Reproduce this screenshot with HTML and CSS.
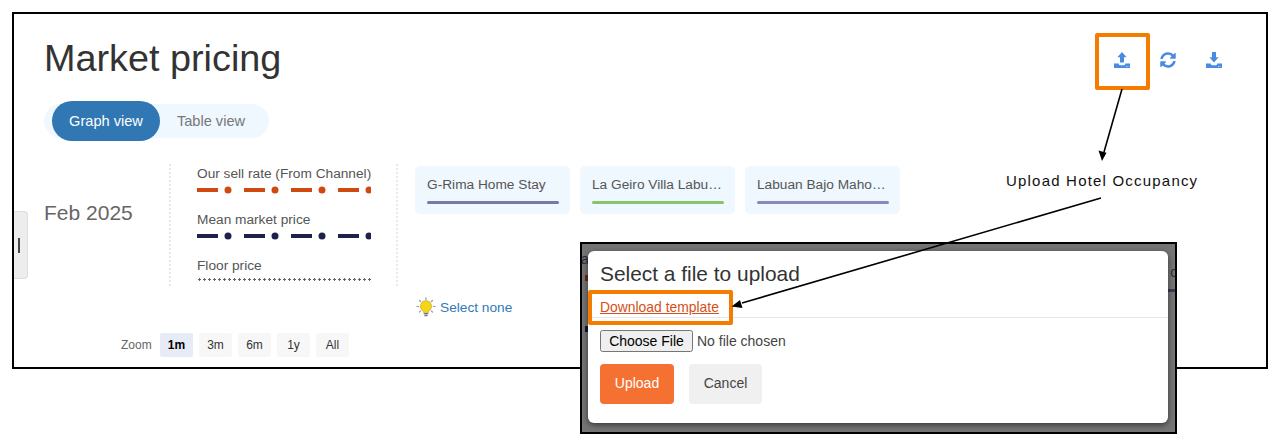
FILE: index.html
```html
<!DOCTYPE html>
<html lang="en">
<head>
<meta charset="utf-8">
<title>Market pricing</title>
<link rel="stylesheet" href="styles.css">
</head>
<body>
<div class="page">
  <main class="frame">
    <button class="handle" aria-label="Toggle sidebar"><span class="handle-bar"></span></button>
    <header class="top">
      <h1 class="title">Market pricing</h1>
      <div class="actions">
        <span class="action"><svg class="icon" viewBox="0 0 16 16"><path d="M8 0l4.600 5.200H10v5.300H6V5.200H3.400z"/><path fill-rule="evenodd" d="M0 11.500h4.800v.6c0 .7.5 1.200 1.200 1.200h4c.7 0 1.200-.5 1.200-1.200v-.6H16V16H0zM12 14v.7h.8V14zm1.600 0v.7h.8V14z"/></svg></span>
        <span class="action"><svg class="icon" viewBox="0 0 512 512"><path d="M370.72 133.28C339.458 104.008 298.888 87.962 255.848 88c-77.458.068-144.328 53.178-162.791 126.85-1.344 5.363-6.122 9.15-11.651 9.15H24.103c-7.498 0-13.194-6.807-11.807-14.176C33.933 94.924 134.813 8 256 8c66.448 0 126.791 26.136 171.315 68.685L463.03 40.97C478.149 25.851 504 36.559 504 57.941V192c0 13.255-10.745 24-24 24H345.941c-21.382 0-32.09-25.851-16.971-40.971l41.75-41.749zM32 296h134.059c21.382 0 32.09 25.851 16.971 40.971l-41.75 41.75c31.262 29.273 71.835 45.319 114.876 45.28 77.418-.07 144.315-53.144 162.787-126.849 1.344-5.363 6.122-9.15 11.651-9.15h57.304c7.498 0 13.194 6.807 11.807 14.176C478.067 417.076 377.187 504 256 504c-66.448 0-126.791-26.136-171.315-68.685L48.97 471.03C33.851 486.149 8 475.441 8 454.059V320c0-13.255 10.745-24 24-24z"/></svg></span>
        <span class="action"><svg class="icon" viewBox="0 0 16 16"><path d="M6 0h4v5.300h2.600L8 10.500 3.400 5.300H6z"/><path fill-rule="evenodd" d="M0 11.500h4.800v.6c0 .7.5 1.200 1.200 1.200h4c.7 0 1.200-.5 1.200-1.200v-.6H16V16H0zM12 14v.7h.8V14zm1.600 0v.7h.8V14z"/></svg></span>
      </div>
    </header>

    <nav class="tabs">
      <a class="tab tab-active">Graph view</a>
      <a class="tab tab-plain">Table view</a>
    </nav>

    <section class="overview">
      <div class="month">Feb 2025</div>
      <div class="legend">
        <div class="legend-item">
          <div class="legend-label">Our sell rate (From Channel)</div>
          <svg class="legend-line line-orange" viewBox="0 0 174 8"><path d="M0 2h21v4H0zM47 2h21v4H47zM94 2h21v4H94zM141 2h21v4h-21z"/><circle cx="31" cy="4" r="3.500"/><circle cx="78" cy="4" r="3.500"/><circle cx="125" cy="4" r="3.500"/><circle cx="172" cy="4" r="3.500"/></svg>
        </div>
        <div class="legend-item">
          <div class="legend-label">Mean market price</div>
          <svg class="legend-line line-navy" viewBox="0 0 174 8"><path d="M0 2h21v4H0zM47 2h21v4H47zM94 2h21v4H94zM141 2h21v4h-21z"/><circle cx="31" cy="4" r="3.500"/><circle cx="78" cy="4" r="3.500"/><circle cx="125" cy="4" r="3.500"/><circle cx="172" cy="4" r="3.500"/></svg>
        </div>
        <div class="legend-item">
          <div class="legend-label">Floor price</div>
          <div class="line-dotted"></div>
        </div>
      </div>
      <div class="chips">
        <div class="chip"><div class="chip-name">G-Rima Home Stay</div><div class="chip-bar bar-slate"></div></div>
        <div class="chip"><div class="chip-name">La Geiro Villa Labu…</div><div class="chip-bar bar-green"></div></div>
        <div class="chip"><div class="chip-name">Labuan Bajo Maho…</div><div class="chip-bar bar-violet"></div></div>
      </div>
    </section>

    <div class="select-row">
      <svg class="bulb" viewBox="0 0 20 20"><g stroke="#9a9a9a" stroke-width="1.200" stroke-linecap="round"><path d="M10 .8v1.700M3.400 3.300l1.200 1.200M16.600 3.300l-1.200 1.200M.9 9.500h1.700M17.400 9.500h1.700M3.500 15l1.200-1.100M16.500 15l-1.200-1.100"/></g><path d="M10 3.600a5.600 5.600 0 0 0-3.300 10.100c.6.500.8 1 .8 1.700h5c0-.7.200-1.200.8-1.700A5.600 5.600 0 0 0 10 3.600z" fill="#f6d516" stroke="#b9a23a" stroke-width=".6"/><path d="M7.700 16h4.600v1.300H7.700zM8.400 17.700h3.200v1.500H8.400z" fill="#777"/></svg>
      <a class="select-link">Select none</a>
    </div>

    <div class="zoom-row">
      <span class="zoom-label">Zoom</span>
      <span class="zoom-btn zoom-on">1m</span>
      <span class="zoom-btn">3m</span>
      <span class="zoom-btn">6m</span>
      <span class="zoom-btn">1y</span>
      <span class="zoom-btn">All</span>
    </div>
  </main>

  <aside class="backdrop">
    <span class="peek peek-a">a</span>
    <span class="peek peek-o">o</span>
    <span class="peek-pip pip-orange"></span>
    <span class="peek-pip pip-navy"></span>
    <span class="peek-bar"></span>
    <div class="modal">
      <div class="modal-head">
        <h2 class="modal-title">Select a file to upload</h2>
        <a class="template-link" href="#">Download template</a>
      </div>
      <div class="modal-body">
        <input class="file" type="file">
        <div class="modal-actions">
          <button class="btn btn-primary">Upload</button>
          <button class="btn btn-plain">Cancel</button>
        </div>
      </div>
    </div>
  </aside>

  <span class="mark mark-upload"></span>
  <span class="mark mark-template"></span>
  <span class="caption">Upload Hotel Occupancy</span>
  <svg class="arrows" viewBox="0 0 1279 446">
    <path d="M1122 89L1104 152M1101 198L742 303" stroke="#000" stroke-width="1.600" fill="none"/>
    <path d="M1102 161l-3.500-10.500 8 2.200zM731.500 306.500l8.500-6.500 2.500 8z" fill="#000"/>
  </svg>
</div>
</body>
</html>
```
FILE: styles.css
```css
* { box-sizing: border-box; }
html, body { margin: 0; padding: 0; background: #fff; }
body { font-family: "Liberation Sans", Arial, sans-serif; color: #555; overflow: hidden; }

.page { position: relative; width: 1279px; height: 446px; overflow: hidden; }

.frame {
  position: relative;
  margin: 12px 0 0 12px;
  width: 1256px;
  height: 357px;
  border: 2px solid #000;
  padding: 0 29px 0 30px;
  background: #fff;
}

.handle {
  position: absolute;
  left: 0;
  top: 197px;
  width: 14px;
  height: 68px;
  padding: 0;
  border: 1px solid #ddd;
  border-left: 0;
  border-radius: 0 4px 4px 0;
  background: #eeeded;
  display: flex;
  align-items: center;
  justify-content: flex-start;
}
.handle-bar { display: block; width: 2px; height: 15px; margin-left: 4px; background: #444; }

.top { display: flex; justify-content: space-between; align-items: center; height: 87px; padding-top: 5px; }
.title { margin: -4px 0 0; font-size: 37.800px; line-height: 44px; font-weight: 400; color: #333; }
.actions { display: flex; }
.action { width: 46px; display: flex; justify-content: center; }
.icon { width: 16px; height: 16px; fill: #4a8ae2; display: block; }

.tabs { display: flex; align-items: center; width: 225px; height: 34px; margin: 3px 0 0; padding-left: 8px; background: #eff7ff; border-radius: 17px; }
.tab { display: flex; align-items: center; justify-content: center; font-size: 14.600px; color: #777; width: 108px; height: 40px; border-radius: 20px; }
.tab-plain { width: 102px; }
.tab-active { background: #3077b4; color: #fff; }

.overview { display: flex; align-items: flex-start; height: 122px; margin-top: 26px; }
.month { width: 125px; padding-top: 37px; font-size: 21px; line-height: 24px; color: #666; }
.legend { width: 229px; height: 122px; padding: 0 25px 0 26px; border-left: 2px dotted #e8e8e8; border-right: 2px dotted #e8e8e8; display: flex; flex-direction: column; }
.legend-item { flex: none; height: 46px; }
.legend-label { font-size: 13.700px; line-height: 20px; color: #555; white-space: nowrap; }
.legend-line { display: block; width: 174px; height: 8px; margin-top: 2px; overflow: hidden; }
.line-orange { fill: #cf4a10; }
.line-navy { fill: #20204f; }
.line-dotted { width: 174px; height: 3px; margin-top: 2px; background-image: radial-gradient(circle, #666 0, #666 1px, transparent 1.400px); background-size: 5px 3px; }

.chips { display: flex; gap: 10px; margin: 2px 0 0 17px; }
.chip { width: 155px; height: 48px; padding: 10px 11px 0 12px; background: #eff7ff; border-radius: 5px; }
.chip-name { font-size: 13.700px; line-height: 18px; color: #555; white-space: nowrap; }
.chip-bar { height: 3px; margin-top: 7px; border-radius: 2px; }
.bar-slate { background: #7778a8; }
.bar-green { background: #86c46f; }
.bar-violet { background: #8c88bd; }

.select-row { display: flex; align-items: center; gap: 4px; height: 20px; margin: 11px 0 0 372px; }
.bulb { width: 20px; height: 20px; }
.select-link { font-size: 13.700px; color: #337ab7; }

.zoom-row { display: flex; align-items: center; gap: 6px; height: 24px; margin: 16px 0 0 77px; }
.zoom-label { font-size: 12px; color: #666; width: 33px; }
.zoom-btn { width: 33px; height: 24px; display: flex; align-items: center; justify-content: center; font-size: 12px; color: #333; background: #f7f7f7; border-radius: 2px; }
.zoom-on { background: #e6ebf5; font-weight: 700; color: #000; }

.backdrop {
  position: absolute;
  left: 580px;
  top: 242px;
  width: 597px;
  height: 192px;
  border: 2px solid #000;
  padding: 7px 7px 9px 6px;
  background: #757575;
  overflow: hidden;
}
.peek { position: absolute; font-size: 14px; color: #2b2b3a; line-height: 18px; }
.peek-a { left: -1px; top: 6px; }
.peek-o { right: -3px; top: 19px; }
.peek-pip { position: absolute; left: 3px; width: 3px; height: 6px; }
.pip-orange { top: 31px; background: #6b2a10; }
.pip-navy { top: 82px; background: #14142e; }
.peek-bar { position: absolute; right: 0; top: 45px; width: 8px; height: 3px; background: #3d3d55; }

.modal { position: relative; height: 100%; background: #fff; border-radius: 6px; box-shadow: 0 2px 6px rgba(0, 0, 0, .55); }
.modal-head { height: 67px; padding: 11px 12px 0; border-bottom: 1px solid #e7e7e7; }
.modal-title { margin: 0; font-size: 20.900px; line-height: 24px; font-weight: 400; color: #333; }
.template-link { display: block; margin-top: 12px; font-size: 13.900px; line-height: 18px; color: #d5501a; }
.modal-body { padding: 12px 12px 0; }
.file { display: block; font: 14px "Liberation Sans", Arial, sans-serif; color: #444; }
.file::file-selector-button { width: 93px; height: 22px; margin-right: 4px; padding: 0; }
.modal-actions { display: flex; gap: 15px; margin-top: 12px; }
.btn { width: 74px; height: 40px; padding: 0 0 2px; border: 0; border-radius: 4px; font: 14px "Liberation Sans", Arial, sans-serif; }
.btn-primary { background: #f57132; color: #fff; }
.btn-plain { width: 73px; background: #f0f0f0; color: #444; }

.mark { position: absolute; border: 4px solid #f57c00; border-radius: 2px; }
.mark-upload { left: 1095px; top: 33px; width: 55px; height: 57px; }
.mark-template { left: 588px; top: 290px; width: 145px; height: 35px; }
.caption { position: absolute; left: 1006px; top: 172px; font-size: 15px; line-height: 18px; letter-spacing: 1.200px; color: #111; white-space: nowrap; }
.arrows { position: absolute; left: 0; top: 0; width: 1279px; height: 446px; pointer-events: none; }
```
